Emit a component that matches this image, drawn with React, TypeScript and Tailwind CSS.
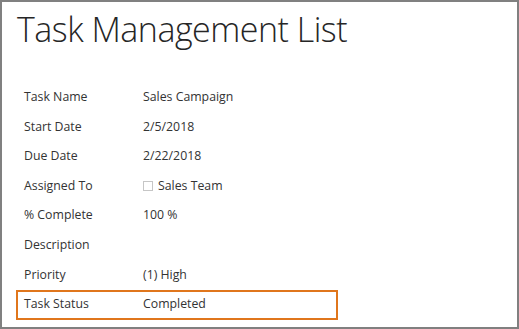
import React from 'react';

const rows: { label: string; value: string; check?: boolean }[] = [
  { label: 'Task Name', value: 'Sales Campaign' },
  { label: 'Start Date', value: '2/5/2018' },
  { label: 'Due Date', value: '2/22/2018' },
  { label: 'Assigned To', value: 'Sales Team', check: true },
  { label: '% Complete', value: '100 %' },
  { label: 'Description', value: '' },
  { label: 'Priority', value: '(1) High' },
];

const App: React.FC = () => {
  return (
    <div
      className="w-[519px] h-[329px] border-2 border-[#808080] bg-white text-[#333333] overflow-hidden"
      style={{ fontFamily: '"Open Sans", "Noto Sans", sans-serif' }}
    >
      <h1 className="pl-[15px] pt-[3px] h-[80.5px] text-[34px] font-light leading-[48px] text-[#262626] tracking-[-0.5px]">
        Task Management List
      </h1>
      <div className="pl-[14px] text-[12.3px]">
        {rows.map((row) => (
          <div key={row.label} className="flex items-center w-[322px] h-[29.6px] pl-[6px] border-2 border-transparent">
            <span className="w-[119px]">{row.label}</span>
            <span className="flex items-center">
              {row.check && <span className="inline-block w-[10px] h-[10px] border border-[#c6c6c6] mr-[5px]"></span>}
              {row.value}
            </span>
          </div>
        ))}
        <div className="flex items-center w-[322px] h-[30px] pl-[6px] border-2 border-[#e0761c]">
          <span className="w-[119px]">Task Status</span>
          <span>Completed</span>
        </div>
      </div>
    </div>
  );
};

export default App;
